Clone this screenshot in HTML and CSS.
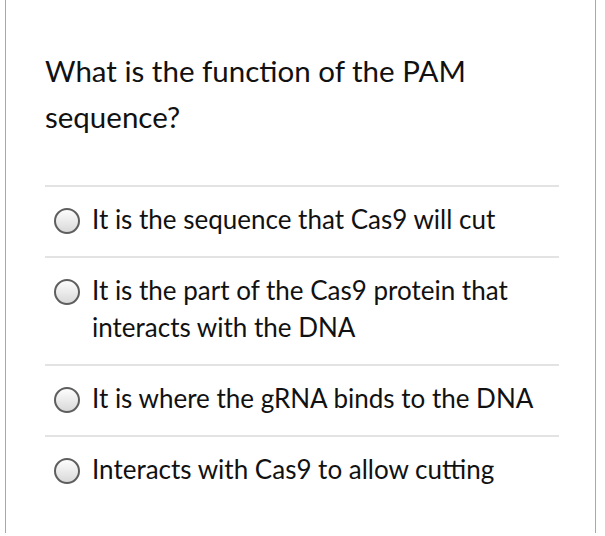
FILE: index.html
```html
<!DOCTYPE html>
<html>
<head>
<meta charset="utf-8">
<link rel="stylesheet" href="styles.css">
</head>
<body>
<div class="frame">
  <div class="question">What is the function of the PAM sequence?</div>
  <ul class="options">
    <li class="option"><span class="radio"></span><span class="label">It is the sequence that Cas9 will cut</span></li>
    <li class="option"><span class="radio"></span><span class="label">It is the part of the Cas9 protein that interacts with the DNA</span></li>
    <li class="option"><span class="radio"></span><span class="label">It is where the gRNA binds to the DNA</span></li>
    <li class="option"><span class="radio"></span><span class="label">Interacts with Cas9 to allow cutting</span></li>
  </ul>
</div>
</body>
</html>
```
FILE: styles.css
```css
html, body {
  margin: 0;
  padding: 0;
  background: #fff;
}
body {
  font-family: Lato, "Open Sans", sans-serif;
  color: #111;
}
.frame {
  margin-left: 5px;
  width: 591px;
  height: 533px;
  border-left: 1px solid #a8a8a8;
  border-right: 1px solid #a8a8a8;
  box-sizing: border-box;
  padding: 48px 36px 0 39px;
}
.question {
  font-size: 29.5px;
  line-height: 46px;
  width: 460px;
  padding-bottom: 45px;
}
.options {
  list-style: none;
  margin: 0;
  padding: 0;
}
.option {
  display: flex;
  align-items: flex-start;
  gap: 12px;
  border-top: 2px solid #e3e3e3;
  padding: 14px 0 18px 9px;
  font-size: 26px;
  line-height: 37px;
}
.radio {
  flex: none;
  width: 22px;
  height: 22px;
  margin-top: 7px;
  border: 2px solid #5e5e5e;
  border-radius: 50%;
  background: linear-gradient(#fdfdfd, #d9d9d9);
}
.label {
  max-width: 450px;
}
```
